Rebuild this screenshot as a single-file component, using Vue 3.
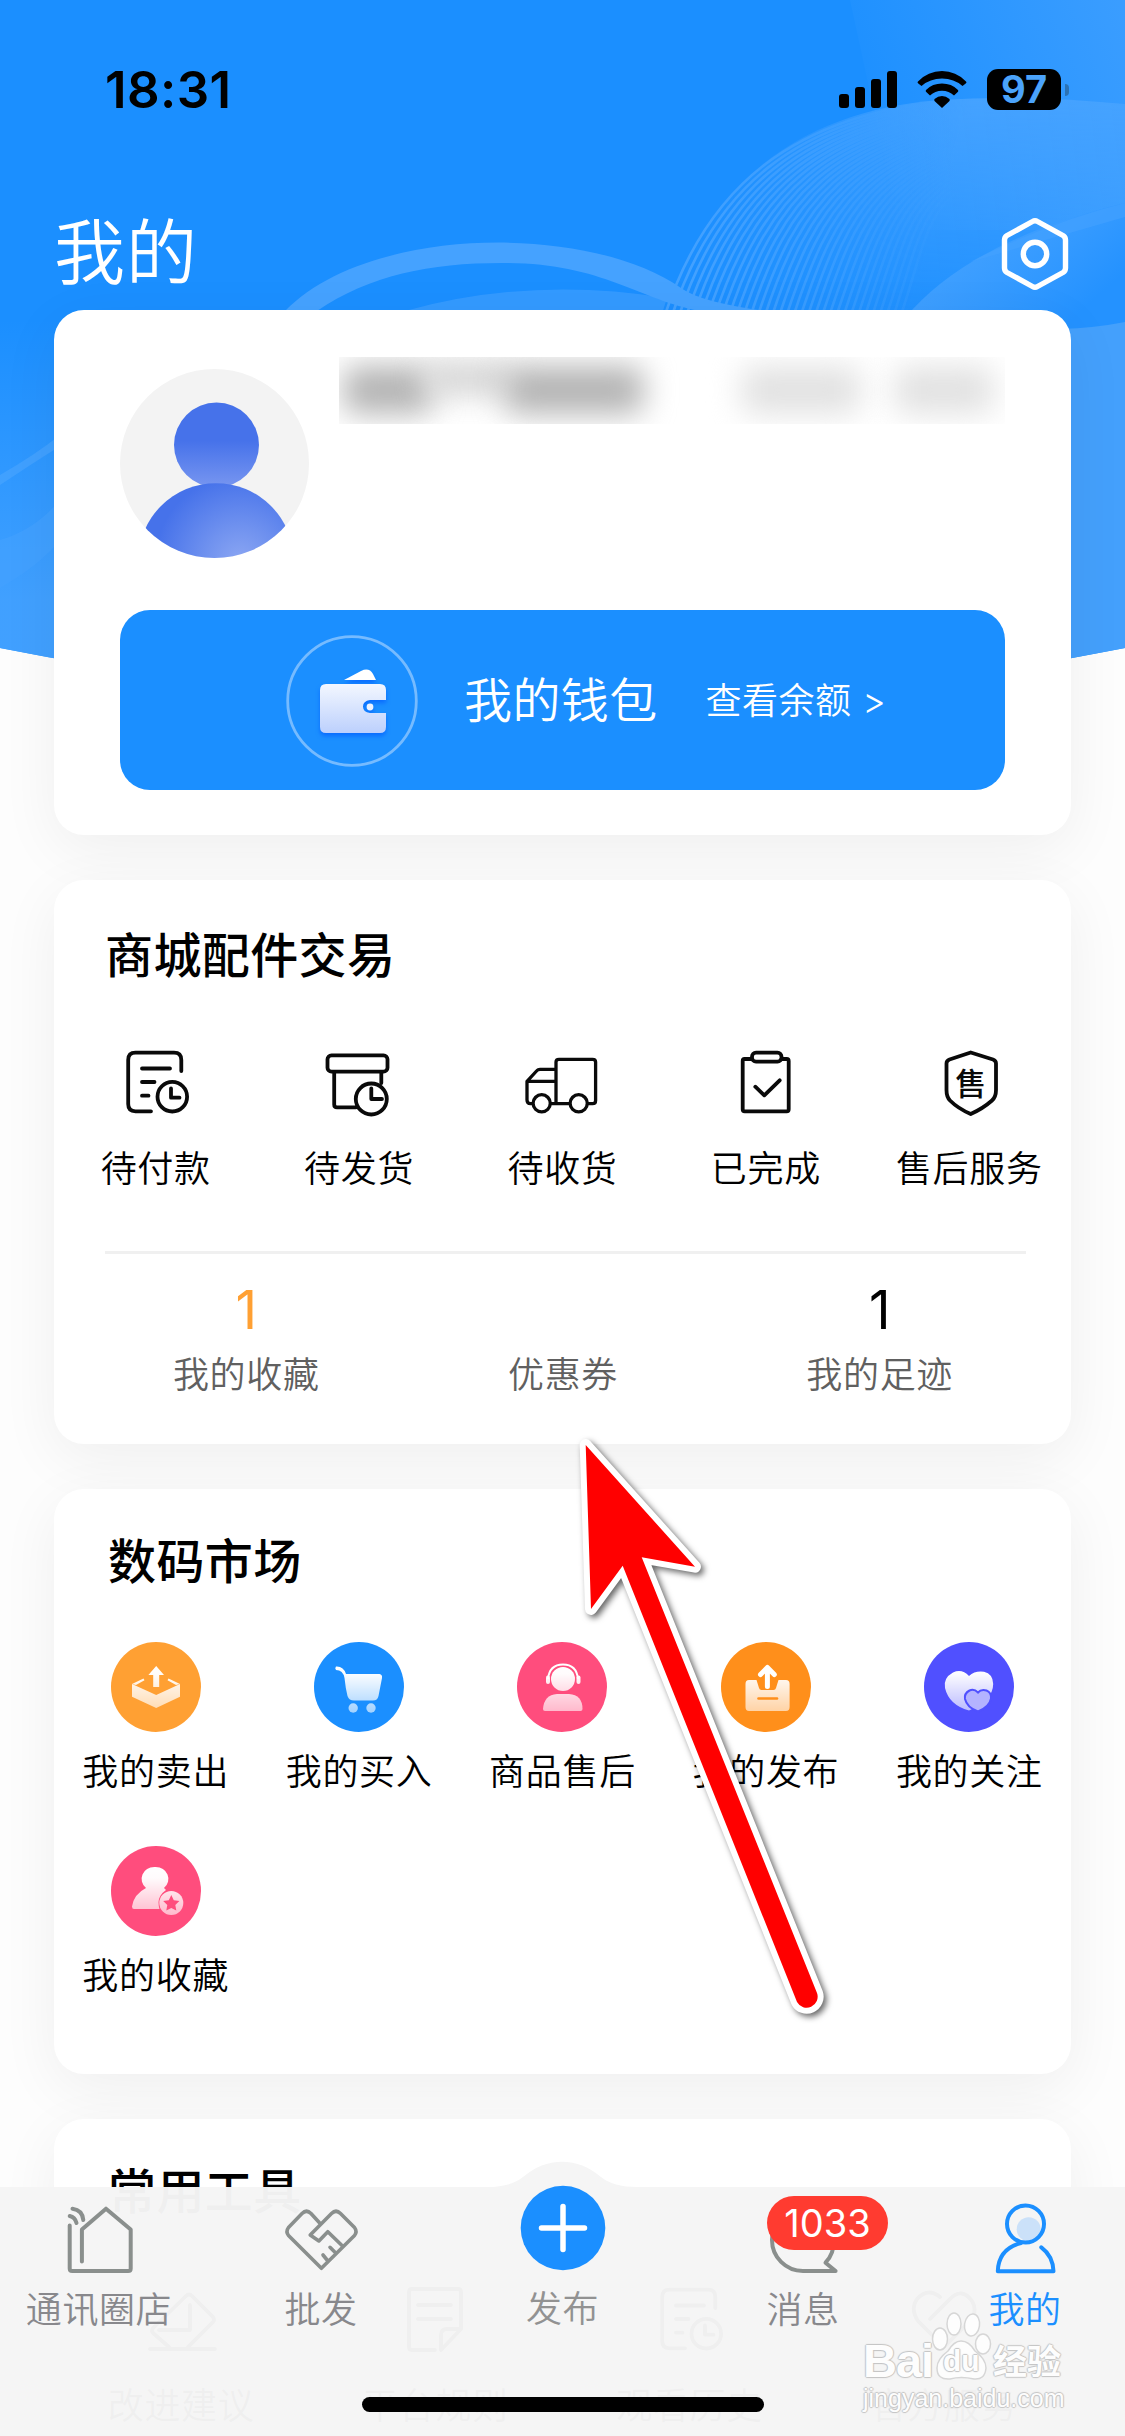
<script setup>
const orders = [
  { key: 'pay', label: '待付款' },
  { key: 'ship', label: '待发货' },
  { key: 'receive', label: '待收货' },
  { key: 'done', label: '已完成' },
  { key: 'service', label: '售后服务' }
]
const stats = [
  { label: '我的收藏', value: '1', tone: 'orange' },
  { label: '优惠券', value: '', tone: '' },
  { label: '我的足迹', value: '1', tone: '' }
]
const market = [
  { key: 'sell', label: '我的卖出', color: '#ffa033' },
  { key: 'buy', label: '我的买入', color: '#1b8fff' },
  { key: 'after', label: '商品售后', color: '#ff4d7d' },
  { key: 'publish', label: '我的发布', color: '#ff8f1b' },
  { key: 'follow', label: '我的关注', color: '#5050ff' },
  { key: 'fav', label: '我的收藏', color: '#ff4d7d' }
]
const tools = [
  { key: 'pen', label: '改进建议' },
  { key: 'rule', label: '平台规则' },
  { key: 'history', label: '观看历史' },
  { key: 'heart', label: '官方服务' }
]

// Fan of thin curves between an outer and an inner boundary
const from = [664, 318, 705, 190, 790, 112, 960, 100]
const to = [900, 318, 935, 215, 920, 190, 1050, 150]
const waves = Array.from({ length: 34 }, (_, i) => {
  const t = i / 33
  const p = from.map((v, k) => (v + (to[k] - v) * t).toFixed(1))
  return `M${p[0]} ${p[1]}C${p[2]} ${p[3]} ${p[4]} ${p[5]} ${p[6]} ${p[7]}`
})
</script>

<template>
  <div class="page">
    <svg class="backdrop" width="1125" height="680" viewBox="0 0 1125 680">
      <defs>
        <linearGradient id="glow" x1="850" y1="120" x2="1125" y2="0" gradientUnits="userSpaceOnUse">
          <stop offset="0" stop-color="#45a2ff" stop-opacity="0" />
          <stop offset="1" stop-color="#45a2ff" stop-opacity=".75" />
        </linearGradient>
        <linearGradient id="hill" x1="960" y1="95" x2="950" y2="310" gradientUnits="userSpaceOnUse">
          <stop offset="0" stop-color="#45a2ff" />
          <stop offset="1" stop-color="#45a2ff" stop-opacity=".15" />
        </linearGradient>
        <linearGradient id="hillx" x1="760" y1="0" x2="980" y2="60" gradientUnits="userSpaceOnUse">
          <stop offset="0" stop-color="#fff" stop-opacity="0.1" />
          <stop offset="1" stop-color="#fff" />
        </linearGradient>
        <mask id="hillmask"><rect width="1125" height="680" fill="url(#hillx)" /></mask>
        <linearGradient id="lines" x1="690" y1="0" x2="960" y2="0" gradientUnits="userSpaceOnUse">
          <stop offset="0" stop-color="#45a2ff" stop-opacity=".95" />
          <stop offset=".5" stop-color="#45a2ff" stop-opacity=".6" />
          <stop offset="1" stop-color="#45a2ff" stop-opacity="0" />
        </linearGradient>
        <linearGradient id="slope" x1="980" y1="240" x2="1060" y2="330" gradientUnits="userSpaceOnUse">
          <stop offset="0" stop-color="#45a2ff" stop-opacity=".8" />
          <stop offset="1" stop-color="#2492ff" />
        </linearGradient>
        <linearGradient id="left" x1="0" y1="320" x2="0" y2="600" gradientUnits="userSpaceOnUse">
          <stop offset="0" stop-color="#45a2ff" stop-opacity="0" />
          <stop offset="1" stop-color="#45a2ff" stop-opacity=".9" />
        </linearGradient>
        <clipPath id="sheet"><path d="M0 0H1125V648Q562 760 0 648Z" /></clipPath>
      </defs>
      <g clip-path="url(#sheet)">
        <rect width="1125" height="680" fill="#1b8fff" />
        <path d="M850 0H1125V230H900Z" fill="url(#glow)" />
        <path d="M664 318C705 190 790 112 940 100C1000 96 1060 98 1125 104V330H664Z" fill="url(#hill)" mask="url(#hillmask)" />
        <path v-for="(d, i) in waves" :key="i" :d="d" fill="none" stroke="url(#lines)" stroke-width="2.6" />
        <path d="M405 311Q530 276 667 298L660 320H380Z" fill="#45a2ff" opacity=".6" />
        <path d="M285 311C370 224 590 224 681 288Q700 302 765 311H700C640 300 600 262 502 263C430 263 370 275 317 311Z" fill="#45a2ff" />
        <path d="M905 318Q970 240 1125 203V340H905Z" fill="url(#slope)" />
        <path d="M970 262Q1050 222 1125 203V217Q1045 240 970 262Z" fill="#45a2ff" opacity=".6" />
        <path d="M1060 329Q1095 328 1125 322V680H1060Z" fill="#44a0fc" />
        <rect y="320" width="60" height="340" fill="url(#left)" />
        <path d="M0 475Q35 455 60 435V446Q30 465 0 485Z" fill="#45a2ff" opacity=".8" />
        <path d="M0 540Q35 530 60 500V540Q40 565 0 588Z" fill="#45a2ff" opacity=".6" />
      </g>
    </svg>

    <header class="status">
      <span class="time">18:31</span>
      <div class="status-icons">
        <svg width="58" height="37" viewBox="0 0 58 37">
          <rect y="23" width="10" height="14" rx="3" /><rect x="16" y="16" width="10" height="21" rx="3" />
          <rect x="32" y="8" width="10" height="29" rx="3" /><rect x="48" width="10" height="37" rx="3" />
        </svg>
        <svg width="50" height="37" viewBox="0 0 50 37">
          <path d="M1 10.500Q11 0 25 0T49 10.500Q50 11.300 49 12.300L45.500 15Q37 7.500 25 7.500T4.500 15L1 12.300Q0 11.300 1 10.500Z" />
          <path d="M9 19Q15.500 12.600 25 12.600T41 19Q41.600 20 41 20.800L37 24.500Q32 19.800 25 19.800T13 24.500L9 20.800Q8.400 20 9 19Z" />
          <path d="M17.500 28Q21 25 25 25T32.500 28Q33 29 32.500 30L25 37L17.500 30Q17 29 17.500 28Z" />
        </svg>
        <div class="battery">97</div>
      </div>
    </header>

    <div class="nav">
      <h1>我的</h1>
      <svg width="68" height="74" viewBox="0 0 68 74" fill="none" stroke="#fff" stroke-width="5.400" stroke-linejoin="round">
        <path d="M31.500 4.500Q34 3 36.500 4.500L62 18.500Q64.500 20 64.500 23V51Q64.500 54 62 55.500L36.500 69.500Q34 71 31.500 69.500L6 55.500Q3.500 54 3.500 51V23Q3.500 20 6 18.500Z" />
        <circle cx="34" cy="37" r="11.700" />
      </svg>
    </div>

    <section class="card profile">
      <div class="user">
        <svg class="avatar" width="189" height="189" viewBox="0 0 189 189">
          <defs>
            <linearGradient id="head" x1="0" y1="0" x2="0" y2="1">
              <stop offset=".45" stop-color="#4672ea" /><stop offset="1" stop-color="#7896f0" />
            </linearGradient>
            <radialGradient id="torso" cx="120" cy="192" r="85" gradientUnits="userSpaceOnUse">
              <stop offset="0" stop-color="#8ba6f3" /><stop offset=".4" stop-color="#7092ef" /><stop offset="1" stop-color="#4672ea" />
            </radialGradient>
            <clipPath id="round"><circle cx="94.500" cy="94.500" r="94.500" /></clipPath>
          </defs>
          <g clip-path="url(#round)">
            <rect width="189" height="189" fill="#f3f3f3" />
            <circle cx="96.500" cy="76" r="42.500" fill="url(#head)" />
            <circle cx="96" cy="192" r="77.800" fill="url(#torso)" />
          </g>
        </svg>
        <div class="masked"><i class="m1"></i><i class="m2"></i><i class="m3"></i><i class="m4"></i><i class="m5"></i></div>
      </div>
      <div class="wallet">
        <svg width="132" height="132" viewBox="0 0 132 132">
          <defs>
            <linearGradient id="purse" x1="0" y1="0" x2="0" y2="1">
              <stop offset="0" stop-color="#f3f7ff" /><stop offset="1" stop-color="#bcd0fd" />
            </linearGradient>
          </defs>
          <circle cx="66" cy="66" r="64.300" fill="none" stroke="#76bbff" stroke-width="2.800" />
          <g class="purse">
            <path d="M58 45L75 36Q83 32 87 39L90 45Z" fill="#fff" />
            <path d="M40 49H94Q100 49 100 55V65H84Q77 66 77 71.500T84 78H100V92Q100 98 94 98H40Q34 98 34 92V55Q34 49 40 49Z" fill="url(#purse)" />
            <circle cx="84" cy="72" r="3.400" fill="#eef3ff" />
          </g>
        </svg>
        <span class="wallet-name">我的钱包</span>
        <span class="wallet-link">查看余额 &gt;</span>
      </div>
    </section>

    <section class="card trade">
      <h2>商城配件交易</h2>
      <div class="grid five">
        <div v-for="o in orders" :key="o.key" class="cell">
          <svg class="line" width="80" height="80" viewBox="0 0 80 80">
            <g v-if="o.key === 'pay'">
              <path d="M65.300 29V18Q65.300 10.700 58 10.700H19.500Q12.200 10.700 12.200 18V62Q12.200 69.300 19.500 69.300H35M26 26.500H54M26 40H38.500M26 53.700H32.500" />
              <circle cx="56.300" cy="54.700" r="14.800" /><path d="M55 46.500V55.700H63.500" />
            </g>
            <g v-else-if="o.key === 'ship'">
              <rect x="8.500" y="13.300" width="60" height="16.400" rx="4" />
              <path d="M15.200 30V62.500Q15.200 65.300 18 65.300H37M62.300 30V41" />
              <circle cx="52.300" cy="57" r="15.500" /><path d="M52.300 46.500V57H63" />
            </g>
            <g v-else-if="o.key === 'receive'" class="thin">
              <path d="M34 61.700V20Q34 17.300 37 17.300H70.500Q73.600 17.300 73.600 20V58.500Q73.600 61.700 70.500 61.700H8.500Q5 61.700 5 58V39.300L15 28.500Q16 27.300 18 27.300H34M5 39.300H34" />
              <circle cx="19.700" cy="61.300" r="8.600" fill="#fff" /><circle cx="56.700" cy="61.300" r="8.600" fill="#fff" />
            </g>
            <g v-else-if="o.key === 'done'">
              <path d="M26 17H18.500Q16.700 17 16.700 19V67.300Q16.700 69.300 18.700 69.300H60.700Q62.700 69.300 62.700 67.300V19Q62.700 17 60.700 17H55.500" />
              <rect x="26" y="10.700" width="29.500" height="9" rx="4" /><path d="M29.300 44.700L38.300 53.300L53.700 38.300" />
            </g>
            <g v-else>
              <path d="M41.700 10.500L64 17.500Q67 18.600 67 21.500V48Q67 55 63 58.500Q54 66.500 41.700 72Q29 66.500 21 58.500Q17.500 55 17.500 48V21.500Q17.500 18.600 20.500 17.500Z" />
              <text x="41.700" y="52.500" text-anchor="middle">售</text>
            </g>
          </svg>
          <span>{{ o.label }}</span>
        </div>
      </div>
      <div class="rule"></div>
      <div class="stats">
        <div v-for="s in stats" :key="s.label" class="stat">
          <b :class="s.tone">{{ s.value }}</b>
          <span>{{ s.label }}</span>
        </div>
      </div>
    </section>

    <section class="card market">
      <h2>数码市场</h2>
      <svg class="defs" width="0" height="0">
        <defs>
          <linearGradient id="fade" x1="0" y1="22" x2="0" y2="72" gradientUnits="userSpaceOnUse">
            <stop offset="0" stop-color="#fff" /><stop offset=".2" stop-color="#fff" stop-opacity=".98" />
            <stop offset="1" stop-color="#fff" stop-opacity=".58" />
          </linearGradient>
        </defs>
      </svg>
      <div class="grid five">
        <div v-for="m in market" :key="m.key" class="cell">
          <svg width="90" height="90" viewBox="0 0 90 90">
            <circle cx="45" cy="45" r="45" :fill="m.color" />
            <g fill="url(#fade)">
              <template v-if="m.key === 'sell'">
                <path d="M45.200 24L53 33H48.200V45H42.200V33H37.400Z" />
                <path d="M21 42L45.200 53L69 42V54.700L45.200 66L21 54.700Z" />
                <path d="M21 42L32.500 36.500L33.500 38.300L25 43Z M69 42L57.500 36.500L56.500 38.300L65 43Z" />
              </template>
              <template v-else-if="m.key === 'buy'">
                <path d="M22 24.500Q29.500 24 32 32H65.500Q68.500 32.500 68 36L64.500 54Q63.500 58.500 59 58.500H40Q35 58.500 33.500 54Q31.500 46 30.500 36Q29 28 22 28Q20.500 26 22 24.500Z" />
                <circle cx="39.200" cy="66" r="4.700" /><circle cx="57" cy="66" r="4.700" />
              </template>
              <template v-else-if="m.key === 'after'">
                <circle cx="46" cy="37" r="12" />
                <path d="M40 52H52Q65.500 53 65.500 67Q65.500 69 63.500 69H28Q26 69 26 67Q27 53 40 52Z" />
                <path d="M31 37Q32.500 22.500 46 22.500T61 37" fill="none" stroke="#fff" stroke-width="2" />
                <rect x="29" y="33.500" width="4" height="8.500" rx="2" /><rect x="59.500" y="33.500" width="4" height="8.500" rx="2" />
              </template>
              <template v-else-if="m.key === 'publish'">
                <path d="M28 38H35.500L38 46Q38.500 48 40.500 48H52.500Q54.500 48 55 46L57.500 38H65Q68.600 38 68.600 42V65Q68.600 69 65 69H28Q24.500 69 24.500 65V42Q24.500 38 28 38Z" />
                <path d="M46.400 44.500V27M39.500 32.500L46.400 25.500L53.300 32.500" fill="none" stroke="#fff" stroke-width="5" stroke-linecap="round" stroke-linejoin="round" />
                <path d="M37.500 56.500H56" stroke="#ff8f1b" stroke-width="2.600" stroke-linecap="round" />
              </template>
              <template v-else-if="m.key === 'follow'">
                <path d="M45 34Q38 26.500 29 30.500Q19 36 21 46Q25 63 45 68.500Q69 58 69.200 42Q69 32 60 29.800Q51 28.500 45 34Z" />
                <path d="M54 50.500Q50 46.500 45.500 48.500Q40 51.500 41 57Q43 65.500 54 69.500Q65.500 65 67 56.500Q67.500 50.500 62.500 48.500Q57 47 54 50.500Z" fill="#b4b3ff" stroke="#5050ff" stroke-width="2" />
              </template>
              <template v-else>
                <path d="M44 21A13 12 0 0 1 53 42L55 44Q48 49 47.500 56Q47.500 60 48.500 63H23Q21 63 21 60.500Q23 48 35 42A13 12 0 0 1 44 21Z" />
                <circle cx="60.300" cy="57" r="12" />
                <path d="M60.300 49L62.800 54.200L68.400 55L64.300 58.900L65.300 64.500L60.300 61.900L55.300 64.500L56.300 58.900L52.200 55L57.800 54.200Z" fill="#ff4d7d" />
              </template>
            </g>
          </svg>
          <span>{{ m.label }}</span>
        </div>
      </div>
    </section>

    <section class="card tools">
      <h2>常用工具</h2>
      <div class="grid four">
        <div v-for="t in tools" :key="t.key" class="cell">
          <svg class="line" width="80" height="80" viewBox="0 0 80 80">
            <path v-if="t.key === 'pen'" d="M9 70H74M28 68L12 54Q10 52 12 49L45 17Q48 14 51 17L72 38Q74 41 72 43L47 68M49 26V51H18" />
            <path v-else-if="t.key === 'rule'" d="M40 71H17Q14 71 14 68V13Q14 10 17 10H63Q66 10 66 13V50L46 71V56Q46 50 52 50H66M23 26H56M23 40H56" />
            <g v-else-if="t.key === 'history'">
              <path d="M65.300 29V18Q65.300 10.700 58 10.700H19.500Q12.200 10.700 12.200 18V62Q12.200 69.300 19.500 69.300H35M26 26.500H54M26 40H38.500M26 53.700H32.500" />
              <circle cx="56.300" cy="54.700" r="14.800" /><path d="M55 46.500V55.700H63.500" />
            </g>
            <path v-else d="M26 40L46 20Q58 8 68 22Q74 32 66 42L40 68L14 42Q6 30 13 20Q24 8 36 18" />
          </svg>
          <span>{{ t.label }}</span>
        </div>
      </div>
    </section>

    <footer class="tabbar">
      <svg class="bump" width="150" height="26" viewBox="0 0 150 26"><path d="M0 26Q24 26 36 16Q54 .7 75 .7T114 16Q126 26 150 26Z" fill="#f5f5f5" /></svg>
      <div class="tab">
        <svg class="tab-icon" width="80" height="80" viewBox="0 0 80 80">
          <path d="M10.700 25.500V68.500Q10.700 71 13.200 71H69.200Q71.700 71 71.700 68.500V29.500L47 8.700L22.900 29.500V61.500M10.700 16Q16 17 17.500 23M13.500 8.700Q23.500 10 24.300 20" />
        </svg>
        <span>通讯圈店</span>
      </div>
      <div class="tab">
        <svg class="tab-icon thin" width="80" height="80" viewBox="0 0 80 80">
          <path d="M39.600 24L30 13.500Q25.500 9 21 13.500L7.500 27.500Q4.500 31.500 7.500 35.500L40.400 68.300L73.500 35.500Q76.500 31.500 73.500 27.500L59.500 13.500Q55 9 50.500 13.500L29.200 35L37.900 41L46.800 31.700L61 45.500M49 47.300L54.700 53M42 55L46.500 60.500" />
        </svg>
        <span>批发</span>
      </div>
      <div class="tab publish">
        <svg width="86" height="86" viewBox="0 0 86 86"><circle cx="43" cy="43" r="42.300" fill="#1b8fff" /><path d="M43 21.500V64.500M21.500 43H64.500" stroke="#fff" stroke-width="5.500" stroke-linecap="round" /></svg>
        <span>发布</span>
      </div>
      <div class="tab">
        <svg class="tab-icon" width="80" height="80" viewBox="0 0 80 80">
          <path d="M40 71H72.600L62.500 62.700Q71 54 71 40A31 31 0 1 0 40 71Z" />
        </svg>
        <span>消息</span>
        <em class="badge">1033</em>
      </div>
      <div class="tab active">
        <svg class="tab-icon" width="80" height="80" viewBox="0 0 80 80">
          <circle cx="43.700" cy="29.300" r="12" class="tint" />
          <circle cx="40.500" cy="24" r="18.500" />
          <path d="M36 43Q13.500 49 12.800 71.300H68.500Q68 56 56.300 47.300" />
        </svg>
        <span>我的</span>
      </div>
      <div class="home-indicator"></div>
    </footer>

    <div class="watermark">
      <div class="wm-top">
        <span class="wm-bai">Bai</span>
        <span class="wm-paw">
          <svg width="62" height="72" viewBox="0 0 62 72" fill="#fdfdfd" stroke="#d6d6d6" stroke-width="1.500">
            <ellipse cx="9" cy="28" rx="7.500" ry="11" /><ellipse cx="23" cy="13" rx="7" ry="11" />
            <ellipse cx="41" cy="14" rx="7.500" ry="11" transform="rotate(8 41 14)" /><ellipse cx="52" cy="33" rx="7.500" ry="10" />
            <path d="M30 30Q38 30 44 40Q55 48 55 57Q54 69 43 68Q30 65 19 68Q6 69 6 57Q6 48 17 40Q23 30 30 30Z" />
          </svg>
          <i>du</i>
        </span>
        <span class="wm-cn">经验</span>
      </div>
      <div class="wm-url">jingyan.baidu.com</div>
    </div>

    <svg class="pointer" width="260" height="610" viewBox="570 1425 260 610">
      <path d="M585.700 1445L695 1566.700L641.700 1557.300L817 1993A11 11 0 0 1 797 2002L622.700 1565.700L591 1609Z" fill="#f00" stroke="#fff" stroke-width="12" stroke-linejoin="round" paint-order="stroke" />
    </svg>
  </div>
</template>

<style>
html,
body {
  margin: 0;
  background: #fdfdfd;
}
</style>

<style scoped>
.page {
  position: relative;
  width: 1125px;
  height: 2436px;
  overflow: hidden;
  background: #fdfdfd;
  color: #000;
  font-family: Inter, "Noto Sans CJK SC", sans-serif;
  font-weight: 350;
}
.page svg {
  display: block;
  flex: none;
}
.backdrop {
  position: absolute;
  left: 0;
  top: 0;
}
.status,
.nav,
.card {
  position: relative;
  box-sizing: border-box;
}
.status {
  display: flex;
  justify-content: space-between;
  align-items: center;
  height: 178px;
  padding: 0 64px 0 105px;
}
.time {
  font-size: 51px;
  font-weight: 600;
  letter-spacing: 0.4px;
}
.status-icons {
  display: flex;
  align-items: center;
  gap: 20px;
}
.battery {
  position: relative;
  width: 74px;
  height: 41px;
  border-radius: 11px;
  background: #000;
  color: #4ba3fb;
  font-size: 38px;
  font-weight: 700;
  line-height: 41px;
  text-align: center;
}
.battery::after {
  content: "";
  position: absolute;
  right: -8px;
  top: 15px;
  width: 4px;
  height: 12px;
  border-radius: 0 4px 4px 0;
  background: #2b72b5;
}
.nav {
  display: flex;
  justify-content: space-between;
  align-items: center;
  height: 132px;
  padding: 20px 56px 0 54px;
}
h1 {
  margin: -4px 0 0;
  color: #fff;
  font-size: 71px;
  font-weight: 350;
  line-height: 84px;
  letter-spacing: 1px;
}
h2 {
  margin: 0;
  padding-top: 1px;
  font-size: 48px;
  font-weight: 500;
  line-height: 60px;
  letter-spacing: 0.4px;
}
.card {
  width: 1017px;
  margin: 0 54px;
  border-radius: 30px;
  background: #fff;
  box-shadow: 0 15px 60px rgba(0, 0, 0, 0.06);
}
.profile {
  height: 525px;
  padding: 59px 66px 45px;
}
.user {
  display: flex;
  height: 189px;
}
.masked {
  position: relative;
  width: 681px;
  height: 67px;
  margin: -12px 0 0 30px;
  overflow: hidden;
}
.masked i {
  position: absolute;
  top: 9px;
  height: 48px;
  border-radius: 14px;
  background: #b4b4b4;
  filter: blur(15px);
}
.masked .m1 { left: 4px; width: 90px; }
.masked .m2 { left: 85px; width: 90px; top: 4px; height: 34px; background: #d4d4d4; }
.masked .m3 { left: 165px; width: 140px; }
.masked .m4 { left: 402px; width: 120px; background: #e2e2e2; }
.masked .m5 { left: 555px; width: 100px; background: #e2e2e2; }
.wallet {
  display: flex;
  align-items: center;
  box-sizing: border-box;
  height: 180px;
  margin-top: 52px;
  padding: 2px 0 0 166px;
  border-radius: 30px;
  background: #1b8fff;
  color: #fff;
}
.purse {
  filter: drop-shadow(0 3px 2px #0a6cff);
}
.wallet-name {
  margin-left: 46px;
  font-size: 48px;
  letter-spacing: 0.4px;
  line-height: 60px;
}
.wallet-link {
  margin-left: 48px;
  font-size: 36px;
  line-height: 60px;
  letter-spacing: 0.5px;
}
.trade {
  height: 564px;
  margin-top: 45px;
  padding-top: 45px;
}
.trade h2 {
  padding-left: 51px;
}
.grid {
  display: grid;
}
.five {
  grid-template-columns: repeat(5, 1fr);
}
.four {
  grid-template-columns: repeat(4, 1fr);
}
.cell {
  display: flex;
  flex-direction: column;
  align-items: center;
}
.cell span {
  font-size: 36px;
  line-height: 52px;
  letter-spacing: 0.7px;
  white-space: nowrap;
}
.line {
  fill: none;
  stroke: #0a0a0a;
  stroke-width: 3.8;
  stroke-linecap: round;
  stroke-linejoin: round;
}
.line .thin {
  stroke-width: 3.3;
}
.line text {
  fill: #0a0a0a;
  stroke: none;
  font-size: 31px;
  font-weight: 500;
}
.trade .grid {
  margin-top: 56px;
}
.trade .cell span {
  margin-top: 21px;
}
.rule {
  height: 3px;
  margin: 56px 45px 0 51px;
  background: #f0f0f0;
}
.stats {
  display: grid;
  grid-template-columns: repeat(3, 1fr);
  margin: 26px 33px 0 34px;
}
.stat {
  display: flex;
  flex-direction: column;
  align-items: center;
}
.stat b {
  height: 60px;
  font-size: 53px;
  font-weight: 400;
  line-height: 60px;
}
.stat .orange {
  color: #ffa033;
}
.stat span {
  margin-top: 10px;
  color: #606060;
  font-size: 36px;
  line-height: 50px;
  letter-spacing: 0.7px;
}
.market {
  height: 585px;
  margin-top: 45px;
  padding-top: 42px;
}
.market h2,
.tools h2 {
  padding-left: 54px;
}
.defs {
  position: absolute;
}
.market .grid {
  margin-top: 50px;
  row-gap: 48px;
}
.market .cell span {
  margin-top: 14px;
}
.tools {
  height: 420px;
  margin-top: 45px;
  padding-top: 42px;
}
.tools .grid {
  margin-top: 57px;
}
.tools .cell span {
  margin-top: 21px;
}
.tabbar {
  position: absolute;
  left: 0;
  bottom: 0;
  display: grid;
  grid-template-columns: 198px 246px 237px 244px 200px;
  box-sizing: border-box;
  width: 1125px;
  height: 249px;
  padding-top: 13px;
  background: rgba(245, 245, 245, 0.975);
}
.bump {
  position: absolute;
  left: 487px;
  top: -26px;
}
.tab {
  position: relative;
  display: flex;
  flex-direction: column;
  align-items: center;
  color: #88888c;
}
.tab span {
  margin-top: 5px;
  font-size: 36px;
  line-height: 50px;
  letter-spacing: 0.6px;
}
.tab-icon {
  fill: none;
  stroke: #8a8f8d;
  stroke-width: 4;
  stroke-linecap: round;
  stroke-linejoin: round;
}
.tab-icon.thin {
  stroke-width: 3.6;
}
.publish {
  color: #929292;
}
.publish svg {
  margin: -15px 0 8px;
}
.active {
  color: #1b8fff;
}
.active .tab-icon {
  stroke: #1b8fff;
}
.active .tint {
  fill: #cbe1f9;
  stroke: none;
}
.badge {
  position: absolute;
  left: 86px;
  top: -4px;
  width: 121px;
  height: 54px;
  border-radius: 27px;
  background: #ff3b30;
  color: #fff;
  font-size: 38px;
  font-style: normal;
  font-weight: 400;
  line-height: 54px;
  text-align: center;
}
.home-indicator {
  position: absolute;
  left: 362px;
  bottom: 24px;
  width: 402px;
  height: 15px;
  border-radius: 8px;
  background: #000;
}
.watermark {
  position: absolute;
  left: 863px;
  top: 2313px;
  color: #fdfdfd;
  text-shadow: 1px 0 1px #c4c4c4, -1px 0 1px #c4c4c4, 0 1px 1px #c4c4c4, 0 -1px 1px #c4c4c4;
  font-family: "Liberation Sans", "Noto Sans CJK SC", sans-serif;
}
.wm-top {
  display: flex;
  align-items: flex-end;
  height: 70px;
}
.wm-bai {
  width: 68px;
  font-size: 47px;
  font-weight: 700;
  line-height: 44px;
  letter-spacing: -1px;
}
.wm-paw {
  position: relative;
  width: 62px;
  height: 72px;
}
.wm-paw i {
  position: absolute;
  left: 12px;
  top: 33px;
  font-size: 30px;
  font-style: normal;
  font-weight: 700;
  line-height: 34px;
}
.wm-cn {
  font-size: 34px;
  font-weight: 700;
  line-height: 42px;
}
.wm-url {
  font-size: 25px;
  line-height: 30px;
}
.pointer {
  position: absolute;
  left: 570px;
  top: 1425px;
  filter: drop-shadow(3px 3px 3px rgba(0, 0, 0, 0.6));
}
</style>
